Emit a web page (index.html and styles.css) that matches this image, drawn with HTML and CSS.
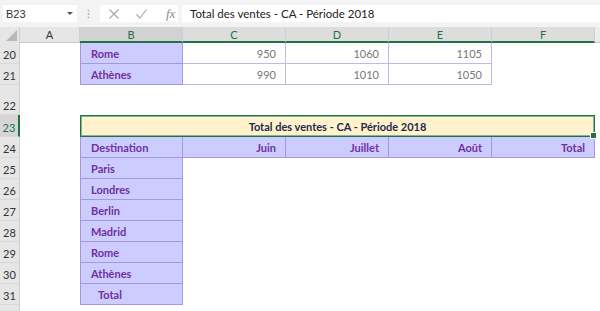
FILE: index.html
```html
<!DOCTYPE html>
<html lang="fr">
<head>
    <meta charset="UTF-8">
    <meta name="viewport" content="width=device-width, initial-scale=1.0">
    <title>Total des ventes</title>
    <link rel="stylesheet" href="styles.css">
</head>
<body>
    <div class="formula-bar">
        <div class="name-box">
            <span>B23</span>
            <span class="caret"></span>
        </div>
        <div class="grip"></div>
        <div class="fx-buttons">
            <svg width="12" height="12" viewBox="0 0 12 12"><path d="M1.5 1.5 L10.5 10.5 M10.5 1.5 L1.5 10.5" stroke="#a6a6a6" stroke-width="1.1" fill="none"/></svg>
            <svg width="13" height="12" viewBox="0 0 13 12"><path d="M1.5 6.5 L5 10 L11.5 1.5" stroke="#a6a6a6" stroke-width="1.1" fill="none"/></svg>
            <span class="fx">fx</span>
        </div>
        <div class="formula-input">Total des ventes - CA - Période 2018</div>
    </div>

    <div class="sheet">
        <div class="row heads">
            <div class="corner"></div>
            <div class="ch">A</div>
            <div class="ch sel active">B</div>
            <div class="ch sel">C</div>
            <div class="ch sel">D</div>
            <div class="ch sel">E</div>
            <div class="ch sel">F</div>
            <div class="ch rest"></div>
        </div>

        <div class="row">
            <div class="rh">20</div><div></div>
            <div class="cell town">Rome</div>
            <div class="cell num">950</div>
            <div class="cell num">1060</div>
            <div class="cell num">1105</div>
            <div></div><div></div>
        </div>
        <div class="row">
            <div class="rh">21</div><div></div>
            <div class="cell town">Athènes</div>
            <div class="cell num">990</div>
            <div class="cell num">1010</div>
            <div class="cell num">1050</div>
            <div></div><div></div>
        </div>
        <div class="row tall">
            <div class="rh">22</div>
        </div>
        <div class="row title-row">
            <div class="rh sel">23</div><div></div>
            <div class="title">Total des ventes - CA - Période 2018</div>
        </div>
        <div class="row">
            <div class="rh">24</div><div></div>
            <div class="cell town">Destination</div>
            <div class="cell head">Juin</div>
            <div class="cell head">Juillet</div>
            <div class="cell head">Août</div>
            <div class="cell head">Total</div>
        </div>
        <div class="row"><div class="rh">25</div><div></div><div class="cell town">Paris</div></div>
        <div class="row"><div class="rh">26</div><div></div><div class="cell town">Londres</div></div>
        <div class="row"><div class="rh">27</div><div></div><div class="cell town">Berlin</div></div>
        <div class="row"><div class="rh">28</div><div></div><div class="cell town">Madrid</div></div>
        <div class="row"><div class="rh">29</div><div></div><div class="cell town">Rome</div></div>
        <div class="row"><div class="rh">30</div><div></div><div class="cell town">Athènes</div></div>
        <div class="row"><div class="rh">31</div><div></div><div class="cell town indent">Total</div></div>
        <div class="row last"><div class="rh">32</div></div>
    </div>
</body>
</html>
```

FILE: styles.css
```css
* {
    margin: 0;
    padding: 0;
    box-sizing: border-box;
}

body {
    font-family: 'Lato', 'Liberation Sans', sans-serif;
    font-size: 11px;
    color: #222222;
    background: #ffffff;
    width: 600px;
    height: 311px;
    overflow: hidden;
}

/* formula bar */

.formula-bar {
    display: flex;
    align-items: center;
    height: 27px;
    padding: 5px 0 5px 3px;
    background: #f3f3f3;
}

.name-box {
    display: flex;
    align-items: center;
    justify-content: space-between;
    width: 74px;
    height: 17px;
    padding: 0 4px 0 3px;
    background: #ffffff;
    font-family: 'Liberation Sans', sans-serif;
    font-size: 11px;
    color: #333333;
}

.caret {
    width: 0;
    height: 0;
    border-left: 3px solid transparent;
    border-right: 3px solid transparent;
    border-top: 3px solid #555555;
}

.grip {
    width: 23px;
    height: 10px;
    background: radial-gradient(circle, #b5b5b5 0.8px, transparent 1.2px) center / 3px 3.5px repeat-y;
}

.fx-buttons {
    display: flex;
    align-items: center;
    gap: 15px;
    width: 78px;
    height: 17px;
    padding-left: 8px;
    background: #ffffff;
}

.fx {
    font-family: 'Liberation Serif', serif;
    font-style: italic;
    font-size: 13px;
    color: #8a8a8a;
    margin-left: 3px;
}

.formula-input {
    flex: 1;
    height: 17px;
    margin-left: 4px;
    padding-left: 8px;
    line-height: 17px;
    background: #ffffff;
    font-size: 11.5px;
    color: #222222;
}

/* grid */

.sheet {
    background: #ffffff;
}

.row {
    display: grid;
    grid-template-columns: 20px 60px 103px 103px 103px 103px 103px 1fr;
    height: 21px;
}

.row.tall {
    height: 30px;
}

.row.title-row {
    height: 22px;
}

.row.last {
    height: 6px;
    overflow: hidden;
}

.row.heads {
    height: 16px;
    background: #e6e6e6;
}

.corner {
    position: relative;
    background: #e6e6e6;
    border-right: 1px solid #d0d0d0;
}

.corner::after {
    content: "";
    position: absolute;
    right: 2px;
    bottom: 2px;
    border-left: 11px solid transparent;
    border-bottom: 11px solid #b9b9b9;
}

.ch {
    display: flex;
    align-items: center;
    justify-content: center;
    border-right: 1px solid #cfcfcf;
    border-bottom: 1px solid #c9c9c9;
    color: #333333;
    font-size: 11px;
}

.ch.sel {
    background: #dddddd;
    color: #217346;
    border-bottom: 2px solid #217346;
}

.ch.active {
    background: #d2d2d2;
}

.ch.rest {
    border-right: none;
    background: #ececec;
}

.rh {
    display: flex;
    align-items: flex-end;
    justify-content: center;
    padding-bottom: 2px;
    background: #e6e6e6;
    border-right: 1px solid #cfcfcf;
    border-bottom: 1px solid #d9d9d9;
    color: #333333;
    font-size: 11px;
}

.row.last .rh {
    align-items: flex-start;
    padding-top: 3px;
    border-bottom: none;
}

.rh.sel {
    background: #d6d6d6;
    color: #217346;
    border-right: 2px solid #217346;
}

.cell {
    display: flex;
    align-items: center;
    padding: 1px 9px 0 10px;
    border-right: 1px solid #c7b5ea;
    border-bottom: 1px solid #c7b5ea;
}

.cell.town {
    background: #ccccff;
    color: #7030a0;
    font-weight: 700;
    border-left: 1px solid #a797dd;
    border-right-color: #a797dd;
    border-bottom-color: #a797dd;
}

.cell.indent {
    padding-left: 17px;
}

.cell.num {
    justify-content: flex-end;
    color: #767676;
}

.cell.head {
    justify-content: flex-end;
    background: #ccccff;
    color: #7030a0;
    font-weight: 700;
    border-right-color: #a797dd;
    border-bottom-color: #a797dd;
}

.title {
    position: relative;
    grid-column: 3 / 8;
    display: flex;
    align-items: center;
    justify-content: center;
    padding-top: 1px;
    background: #fff2cc;
    border: 1px solid #217346;
    box-shadow: inset 0 0 0 1px #86b596;
    color: #1f2a4d;
    font-weight: 700;
    font-size: 11px;
}

.title::after {
    content: "";
    position: absolute;
    right: -3px;
    bottom: -3px;
    width: 5px;
    height: 5px;
    background: #217346;
    border: 1px solid #ffffff;
}
```
